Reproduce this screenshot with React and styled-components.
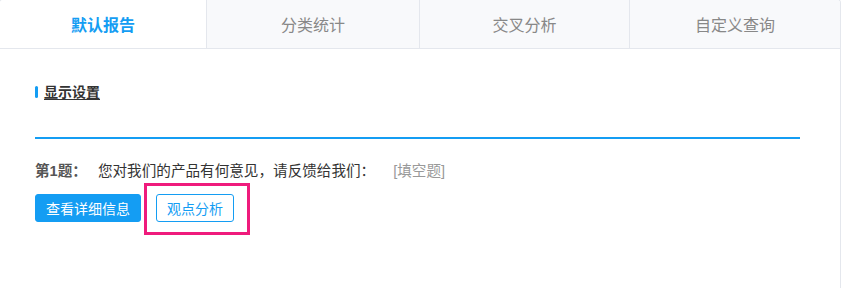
import styled, { createGlobalStyle } from "styled-components";

const GlobalStyle = createGlobalStyle`
  * {
    box-sizing: border-box;
  }
  body {
    margin: 0;
    background: #fff;
    font-family: "Liberation Sans", "Noto Sans CJK SC", sans-serif;
  }
`;

const Panel = styled.div`
  width: 842px;
  height: 289px;
  margin: -1px 0 0 -1px;
  border: 1px solid #e4e7ed;
  border-bottom: none;
  border-radius: 4px 4px 0 0;
  overflow: hidden;
  background: #fff;
`;

const TabBar = styled.div`
  display: flex;
  height: 49px;
  border-bottom: 1px solid #e4e7ed;
`;

const Tab = styled.div`
  flex: ${(p) => (p.$w ? `0 0 ${p.$w}px` : "1")};
  display: flex;
  align-items: center;
  justify-content: center;
  font-size: 16px;
  color: ${(p) => (p.$active ? "#149df3" : "#888")};
  font-weight: ${(p) => (p.$active ? 700 : 400)};
  background: ${(p) => (p.$active ? "#fff" : "#f8f9fb")};
  border-left: 1px solid #e4e7ed;

  &:first-child {
    border-left: none;
  }
`;

const Content = styled.div`
  padding: 35px 40px 0 35px;
`;

const SectionTitle = styled.div`
  display: flex;
  align-items: center;
  gap: 6px;
  height: 16px;
`;

const Marker = styled.span`
  width: 3px;
  height: 12px;
  border-radius: 2px;
  background: #149df3;
`;

const TitleText = styled.span`
  font-size: 14px;
  font-weight: 700;
  color: #333;
  text-decoration: underline;
  text-underline-offset: 2px;
  line-height: 16px;
`;

const Divider = styled.div`
  height: 2px;
  margin-top: 37px;
  background: #149df3;
`;

const Question = styled.div`
  display: flex;
  align-items: center;
  margin-top: 22px;
  font-size: 14.6px;
  line-height: 20px;
`;

const QNum = styled.span`
  font-weight: 700;
  color: #555;
  margin-right: 11px;
`;

const QText = styled.span`
  color: #333;
`;

const QType = styled.span`
  color: #999;
  margin-left: 18px;
`;

const Actions = styled.div`
  display: flex;
  align-items: center;
  gap: 15px;
  margin-top: 13px;
`;

const Button = styled.button`
  position: relative;
  height: 28px;
  padding: 0 10px;
  font-family: inherit;
  font-size: 14px;
  border-radius: 3px;
  cursor: pointer;
  border: 1px solid #149df3;
  background: ${(p) => (p.$primary ? "#149df3" : "#fff")};
  color: ${(p) => (p.$primary ? "#fff" : "#149df3")};
`;

const Highlight = styled.span`
  position: absolute;
  left: -13px;
  top: -12px;
  right: -17px;
  bottom: -14px;
  border: 3px solid #ef1b7c;
  pointer-events: none;
`;

const tabs = [
  { label: "默认报告", w: 206 },
  { label: "分类统计", w: 213 },
  { label: "交叉分析", w: 210 },
  { label: "自定义查询" },
];

export default function App() {
  return (
    <>
      <GlobalStyle />
      <Panel>
        <TabBar>
          {tabs.map((t, i) => (
            <Tab key={t.label} $w={t.w} $active={i === 0}>
              {t.label}
            </Tab>
          ))}
        </TabBar>
        <Content>
          <SectionTitle>
            <Marker />
            <TitleText>显示设置</TitleText>
          </SectionTitle>
          <Divider />
          <Question>
            <QNum>第1题：</QNum>
            <QText>您对我们的产品有何意见，请反馈给我们：</QText>
            <QType>[填空题]</QType>
          </Question>
          <Actions>
            <Button $primary>查看详细信息</Button>
            <Button>
              观点分析
              <Highlight />
            </Button>
          </Actions>
        </Content>
      </Panel>
    </>
  );
}
